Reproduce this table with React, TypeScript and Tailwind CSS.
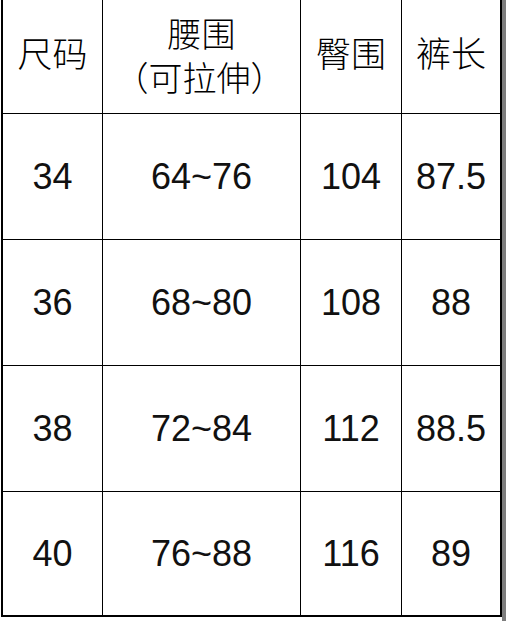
import React from "react";

const rows = [
  ["34", "64~76", "104", "87.5"],
  ["36", "68~80", "108", "88"],
  ["38", "72~84", "112", "88.5"],
  ["40", "76~88", "116", "89"],
];

const colCls = [
  "border-r border-black",
  "border-r border-black",
  "border-r border-black",
  "",
];

export default function App() {
  return (
    <div className="w-[506px] h-[621px] bg-white flex overflow-hidden">
      <div className="ml-[1px] h-[617px] border-l-2 border-r-2 border-b-2 border-black grid grid-cols-[100px_198px_101px_98px] grid-rows-[114px_126px_126px_126px_123px] text-black">
        <div className="border-r border-b border-black flex items-center justify-center pb-2 text-[35px] font-light font-['Noto_Sans_CJK_SC',sans-serif]">
          尺码
        </div>
        <div className="border-r border-b border-black flex flex-col items-center justify-center gap-[2px] pb-1 text-[34px] leading-[42px] font-light font-['Noto_Sans_CJK_SC',sans-serif]">
          <span>腰围</span>
          <span className="-ml-1">（可拉伸）</span>
        </div>
        <div className="border-r border-b border-black flex items-center justify-center pb-2 text-[35px] font-light font-['Noto_Sans_CJK_SC',sans-serif]">
          臀围
        </div>
        <div className="border-b border-black flex items-center justify-center pb-2 text-[35px] font-light font-['Noto_Sans_CJK_SC',sans-serif]">
          裤长
        </div>
        {rows.map((r, ri) =>
          r.map((c, ci) => (
            <div
              key={`${ri}-${ci}`}
              className={`${colCls[ci]} ${ri < rows.length - 1 ? "border-b" : ""} border-black flex items-center justify-center text-[36px] text-[#111] font-['Liberation_Sans',Arial,sans-serif]`}
            >
              {c}
            </div>
          ))
        )}
      </div>
      <div className="flex-1 h-full bg-[#7d7d7d]" />
    </div>
  );
}
